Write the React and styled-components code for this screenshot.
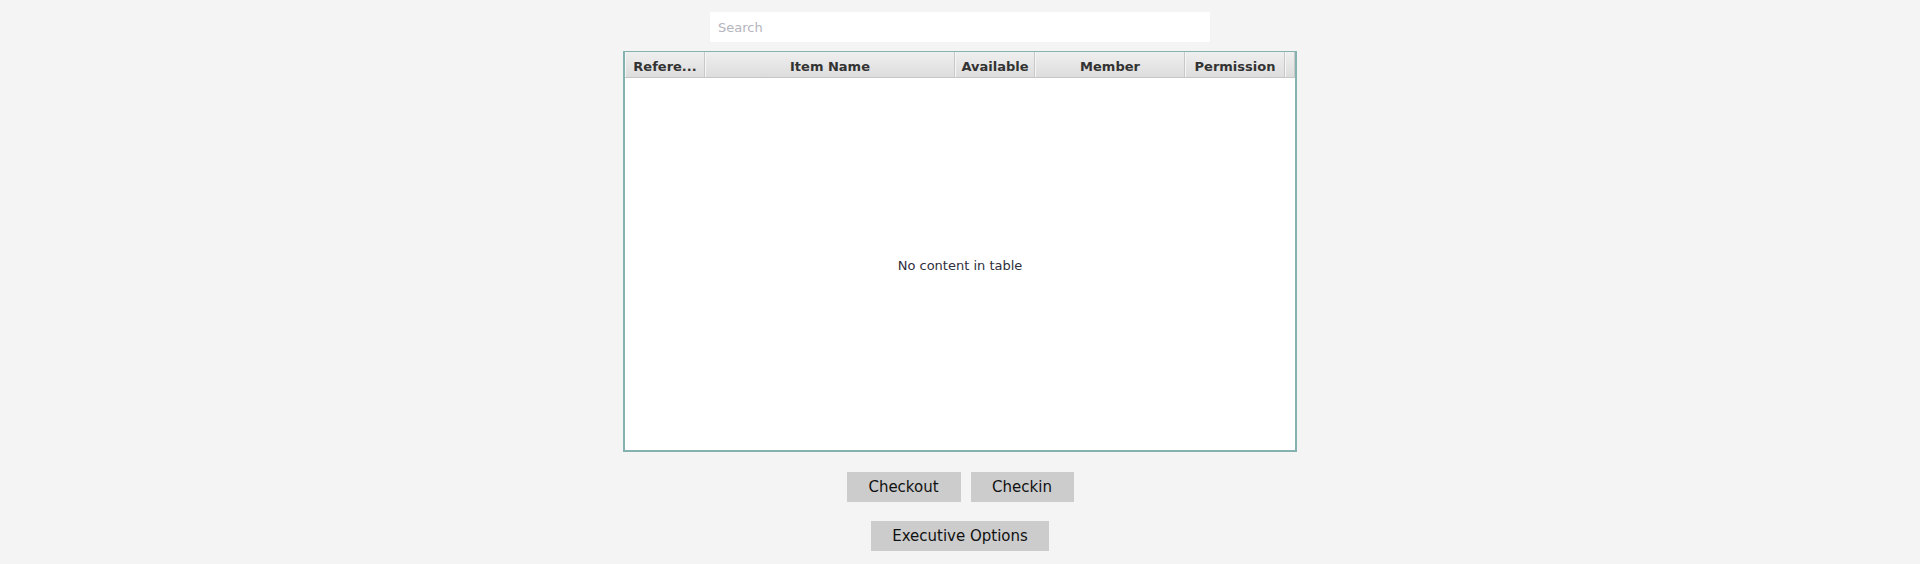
import styled, { createGlobalStyle } from "styled-components";

const GlobalStyle = createGlobalStyle`
  html, body {
    margin: 0;
    padding: 0;
    background: #f4f4f4;
    font-family: "DejaVu Sans", "Liberation Sans", sans-serif;
  }
`;

const Page = styled.div`
  width: 1920px;
  height: 564px;
  display: flex;
  flex-direction: column;
  align-items: center;
  padding-top: 12px;
  box-sizing: border-box;
`;

const SearchInput = styled.input`
  width: 500px;
  height: 30px;
  box-sizing: border-box;
  border: none;
  outline: none;
  background: #ffffff;
  padding: 0 8px;
  font-family: inherit;
  font-size: 13px;
  color: #333;
  &::placeholder {
    color: #b4b4bc;
  }
`;

const Table = styled.div`
  margin-top: 9px;
  width: 674px;
  height: 401px;
  box-sizing: border-box;
  border: 2px solid #84b3af;
  border-top-width: 1px;
  background: #ffffff;
  display: flex;
  flex-direction: column;
`;

const HeaderRow = styled.div`
  display: flex;
  height: 26px;
  flex-shrink: 0;
  background: linear-gradient(#efefef, #dddddd);
  border-bottom: 1px solid #c6c6c6;
  box-sizing: border-box;
`;

const HeaderCell = styled.div`
  width: ${(p) => p.$w}px;
  flex: ${(p) => (p.$fill ? 1 : "none")};
  box-sizing: border-box;
  border-right: 1px solid #c8c8c8;
  border-left: 1px solid #f6f6f6;
  display: flex;
  align-items: center;
  justify-content: center;
  padding-top: 3px;
  font-size: 13px;
  font-weight: bold;
  color: #333;
  white-space: nowrap;
`;

const Body = styled.div`
  flex: 1;
  display: flex;
  align-items: center;
  justify-content: center;
  font-size: 13px;
  color: #2f2f3c;
  padding-top: 3px;
`;

const ButtonRow = styled.div`
  display: flex;
  gap: 10px;
  margin-top: 20px;
`;

const Button = styled.button`
  height: 30px;
  width: ${(p) => p.$w}px;
  border: none;
  background: #cccccc;
  font-family: inherit;
  font-size: 15px;
  color: #111;
  padding: 0;
  cursor: pointer;
`;

const ExecRow = styled(ButtonRow)`
  margin-top: 19px;
`;

const columns = [
  { label: "Refere...", w: 80 },
  { label: "Item Name", w: 250 },
  { label: "Available", w: 80 },
  { label: "Member", w: 150 },
  { label: "Permission", w: 100 },
];

const App = () => {
  return (
    <Page>
      <GlobalStyle />
      <SearchInput placeholder="Search" />
      <Table>
        <HeaderRow>
          {columns.map((c) => (
            <HeaderCell key={c.label} $w={c.w}>
              {c.label}
            </HeaderCell>
          ))}
          <HeaderCell $fill />
        </HeaderRow>
        <Body>No content in table</Body>
      </Table>
      <ButtonRow>
        <Button $w={114}>Checkout</Button>
        <Button $w={103}>Checkin</Button>
      </ButtonRow>
      <ExecRow>
        <Button $w={178}>Executive Options</Button>
      </ExecRow>
    </Page>
  );
};

export default App;
